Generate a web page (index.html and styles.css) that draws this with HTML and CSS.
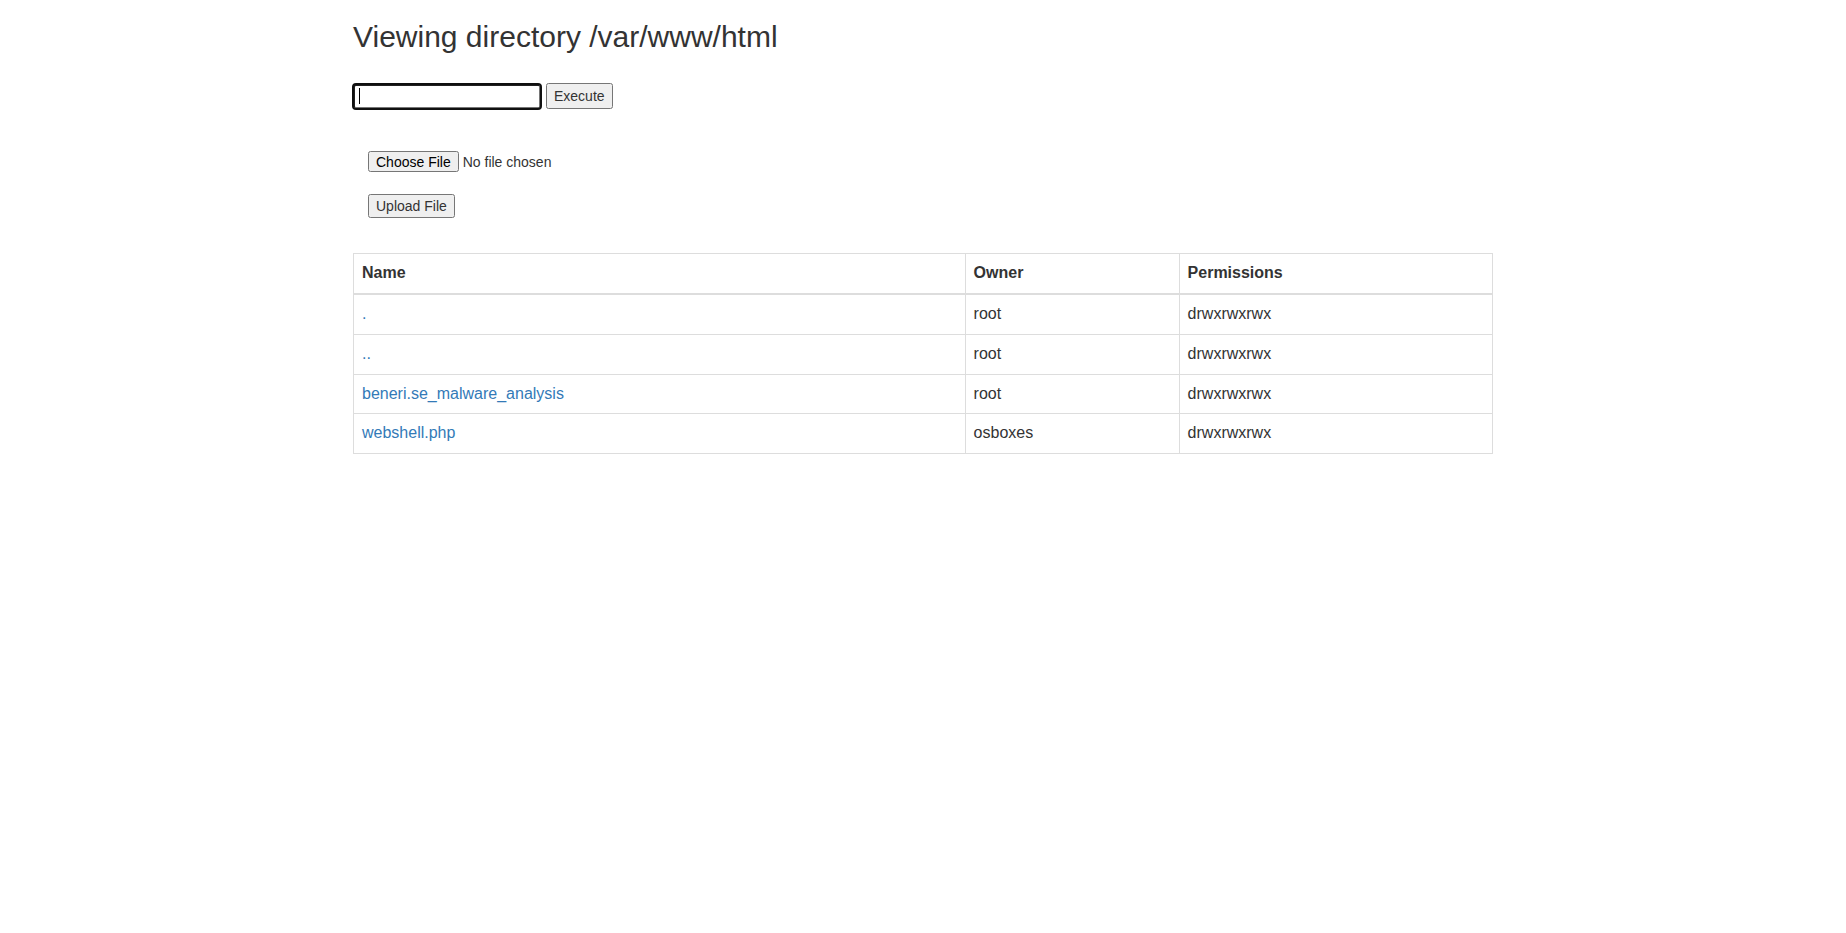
FILE: index.html
```html
<!DOCTYPE html>
<html lang="en">
<head>
    <meta charset="UTF-8">
    <meta name="viewport" content="width=device-width, initial-scale=1.0">
    <title>Viewing directory /var/www/html</title>
    <link rel="stylesheet" href="styles.css">
</head>
<body>
    <div class="container">
        <h2>Viewing directory /var/www/html</h2>
        <form class="cmd-form">
            <input type="text" name="cmd" class="cmd-input">
            <input type="submit" value="Execute" class="btn-exec">
        </form>
        <form class="upload-form">
            <input type="file" name="file">
            <input type="submit" value="Upload File" class="btn-upload">
        </form>
        <table class="table table-bordered">
            <thead>
                <tr>
                    <th>Name</th>
                    <th>Owner</th>
                    <th>Permissions</th>
                </tr>
            </thead>
            <tbody>
                <tr>
                    <td><a href="#">.</a></td>
                    <td>root</td>
                    <td>drwxrwxrwx</td>
                </tr>
                <tr>
                    <td><a href="#">..</a></td>
                    <td>root</td>
                    <td>drwxrwxrwx</td>
                </tr>
                <tr>
                    <td><a href="#">beneri.se_malware_analysis</a></td>
                    <td>root</td>
                    <td>drwxrwxrwx</td>
                </tr>
                <tr>
                    <td><a href="#">webshell.php</a></td>
                    <td>osboxes</td>
                    <td>drwxrwxrwx</td>
                </tr>
            </tbody>
        </table>
    </div>
</body>
</html>
```

FILE: styles.css
```css
body {
    margin: 0;
    font-family: "Liberation Sans", Arial, sans-serif;
    font-size: 16px;
    line-height: 1.42857143;
    color: #333;
    background-color: #fff;
}
.container {
    width: 1170px;
    margin: 0 auto;
    padding: 0 15px;
    box-sizing: border-box;
}
h2 {
    font-size: 30px;
    font-weight: 500;
    line-height: 1.1;
    margin: 20px 0 10px;
}
input {
    font-family: inherit;
    font-size: 14px;
    box-sizing: border-box;
}
.cmd-form {
    display: flex;
    align-items: center;
    gap: 5px;
    margin: 30px 0 0;
}
.cmd-input {
    width: 188px;
    height: 25px;
    outline: 2px solid #101010;
    outline-offset: -1px;
    border-radius: 3px;
    background: #fff linear-gradient(#000, #000) no-repeat 4px center / 1px 16px;
}
.btn-exec,
.btn-upload {
    color: #333;
    padding: 0 6px;
}
.btn-exec {
    height: 26px;
}
.btn-upload {
    display: block;
    height: 24px;
}
.upload-form {
    margin: 42px 0 0;
    padding: 0 15px;
}
input[type="file"] {
    display: block;
    height: 21px;
    color: #333;
    margin-bottom: 22px;
}
input[type="file"]::file-selector-button {
    height: 21px;
    padding: 0 6px;
    font-size: 14px;
}
a {
    color: #337ab7;
    text-decoration: none;
}
.table {
    width: 100%;
    max-width: 100%;
    margin: 35px 0 20px;
    border-collapse: collapse;
    border-spacing: 0;
}
.table th {
    text-align: left;
    font-weight: bold;
}
.table th,
.table td {
    padding: 8px;
    vertical-align: top;
    border: 1px solid #ddd;
}
.table thead th {
    vertical-align: bottom;
    border-bottom-width: 2px;
}
```
